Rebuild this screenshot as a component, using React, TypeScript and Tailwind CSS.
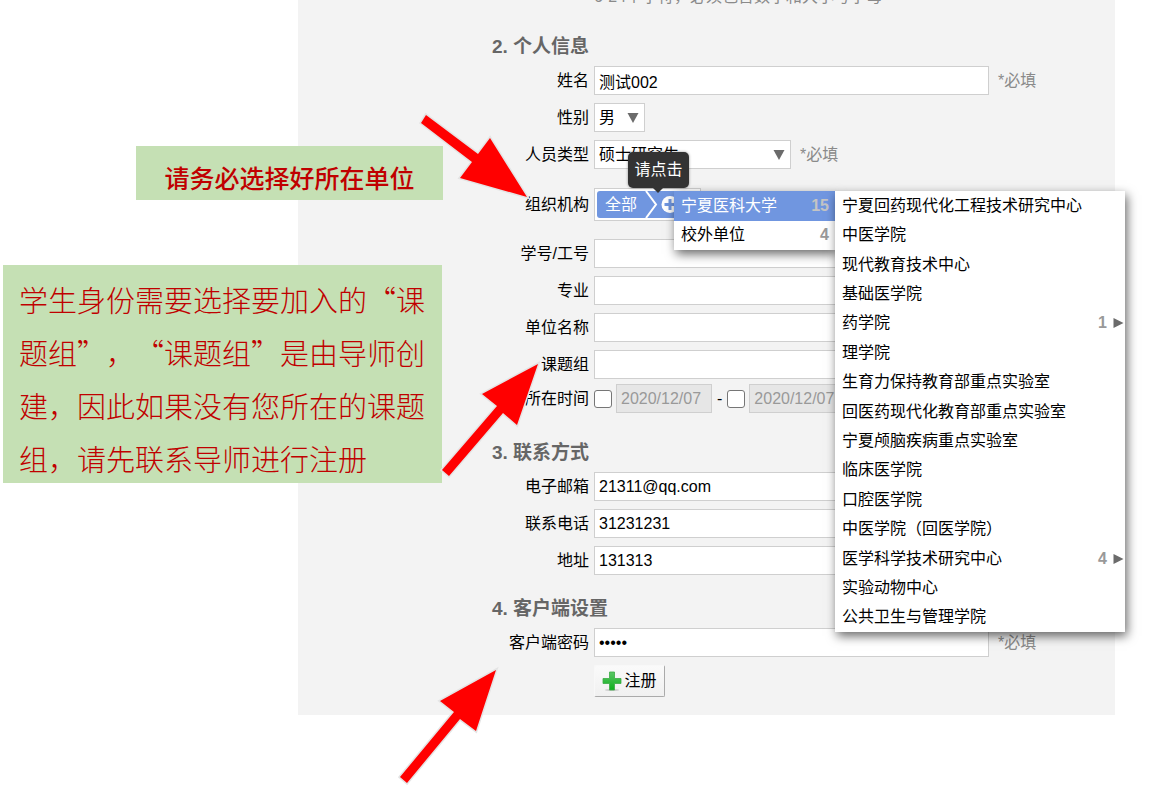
import type { ReactNode } from 'react'

type MenuEntry = { name: string; count?: number; active?: boolean }

const rootUnits: MenuEntry[] = [
  { name: '宁夏医科大学', count: 15, active: true },
  { name: '校外单位', count: 4 },
]

const subUnits: MenuEntry[] = [
  { name: '宁夏回药现代化工程技术研究中心' },
  { name: '中医学院' },
  { name: '现代教育技术中心' },
  { name: '基础医学院' },
  { name: '药学院', count: 1 },
  { name: '理学院' },
  { name: '生育力保持教育部重点实验室' },
  { name: '回医药现代化教育部重点实验室' },
  { name: '宁夏颅脑疾病重点实验室' },
  { name: '临床医学院' },
  { name: '口腔医学院' },
  { name: '中医学院（回医学院）' },
  { name: '医学科学技术研究中心', count: 4 },
  { name: '实验动物中心' },
  { name: '公共卫生与管理学院' },
]

const noteLines = [
  '学生身份需要选择要加入的“课',
  '题组”，“课题组”是由导师创',
  '建，因此如果没有您所在的课题',
  '组，请先联系导师进行注册',
]

const arrows = [
  '426,115 478,154 490,138 527,197 460,178 472,162 421,123',
  '442,470 497,406 482,394 538,364 517,425 503,413 449,476',
  '400,777 454,712 440,701 496,670 476,731 460,719 407,783',
]

const box = 'h-[29px] border border-[#cfcfcf] bg-white px-1 text-base text-black outline-none'

function Row({ label, htmlFor, children }: { label: string; htmlFor?: string; children: ReactNode }) {
  return (
    <div className="flex items-center gap-[5px]">
      <label htmlFor={htmlFor} className="w-[291px] shrink-0 text-right">
        {label}
      </label>
      {children}
    </div>
  )
}

function Required() {
  return <span className="ml-1 text-[#8a8a8a]">*必填</span>
}

function TextRow({ label, id, value = '', type = 'text', required }: { label: string; id: string; value?: string; type?: string; required?: boolean }) {
  return (
    <Row label={label} htmlFor={id}>
      <input id={id} type={type} defaultValue={value} className={`w-[395px] ${box}`} />
      {required && <Required />}
    </Row>
  )
}

function Select({ id, value, className }: { id: string; value: string; className: string }) {
  return (
    <span className={`relative ${className}`}>
      <select id={id} className={`block w-full appearance-none ${box}`}>
        <option>{value}</option>
      </select>
      <svg viewBox="0 0 12 10" className="pointer-events-none absolute top-[10px] right-[6px] h-[10px] w-3" fill="#6b6b6b">
        <path d="M0.500 0h11L6 10z" />
      </svg>
    </span>
  )
}

function DateBox({ label }: { label: string }) {
  return (
    <span className="flex items-center gap-1">
      <input type="checkbox" aria-label={label} className="h-[18px] w-[18px] appearance-none rounded-[3px] border border-[#767676] bg-white" />
      <input type="text" aria-label={label} defaultValue="2020/12/07" disabled className="h-[29px] w-24 border border-[#cfcfcf] bg-[#e6e6e6] px-1 text-base text-[#999]" />
    </span>
  )
}

function Heading({ children }: { children: ReactNode }) {
  return <h2 className="ml-[194px] h-6 text-[19px] leading-6 font-bold text-[#666]">{children}</h2>
}

function MenuItem({ item, arrow }: { item: MenuEntry; arrow?: boolean }) {
  return (
    <li className={`flex flex-1 items-center justify-between pl-[7px] ${item.active ? 'bg-[#7096e0] text-white' : 'text-black'}`}>
      <span>{item.name}</span>
      {item.count && (
        <span className="flex items-center">
          <b className={`mr-[6px] ${item.active ? 'text-[#c4c4c4]' : 'text-[#999]'}`}>{item.count}</b>
          {arrow && (
            <svg viewBox="0 0 11 12" className="mr-px h-3 w-[11px]" fill="#6b6b6b">
              <path d="M0.500 1v10l10-5z" />
            </svg>
          )}
        </span>
      )}
    </li>
  )
}

function OrgPicker() {
  return (
    <div className="relative h-[33px] w-[107px] border border-[#cfcfcf] bg-white p-[2px]">
      <div className="flex h-[27px] items-center rounded-l-[3px] bg-[#7096e0] pl-2 text-white">
        <span>全部</span>
        <svg viewBox="0 0 40 27" className="ml-2 h-[27px] w-10 shrink-0" fill="none">
          <path d="M1 0l10 13.5L1 27" stroke="#fff" strokeWidth="2" />
          <circle cx="25" cy="13.5" r="8.5" fill="#fff" />
          <path d="M25 8v11M19.500 13.500h11" stroke="#7096e0" strokeWidth="3" />
        </svg>
      </div>

      <ul className="absolute top-[2px] left-[79px] z-10 flex h-[59px] w-[161px] flex-col bg-white shadow-[2px_4px_10px_rgba(0,0,0,0.6)]">
        {rootUnits.map((item) => (
          <MenuItem key={item.name} item={item} />
        ))}
      </ul>
      <ul className="absolute top-[2px] left-60 z-20 flex h-[441px] w-[290px] flex-col bg-white shadow-[2px_4px_10px_rgba(0,0,0,0.6)]">
        {subUnits.map((item) => (
          <MenuItem key={item.name} item={item} arrow />
        ))}
      </ul>

      <div role="tooltip" className="absolute -top-[37px] left-[33px] z-30 flex h-9 w-[61px] items-center justify-center rounded-[5px] bg-[#333] whitespace-nowrap text-white shadow-[0_0_3px_rgba(0,0,0,0.4)]">
        请点击
        <svg viewBox="0 0 10 5" className="absolute top-full left-[25px] h-[5px] w-[10px]" fill="#333">
          <path d="M0 0h10L5 5z" />
        </svg>
      </div>
    </div>
  )
}

export default function App() {
  return (
    <div className="relative min-h-screen overflow-hidden bg-white pr-[49px] pl-[298px] font-['Liberation_Sans','Noto_Sans_CJK_SC',sans-serif] text-base leading-6 text-black">
      <form className="flow-root bg-[#f3f3f3] pb-[18px]">
        <p className="-mt-[13px] ml-[296px] h-5 leading-5 text-[#8a8a8a]">6-24个字符，必须包含数字和大小写字母</p>

        <div className="mt-7">
          <Heading>2. 个人信息</Heading>
        </div>
        <div className="mt-[7px] flex flex-col gap-2">
          <TextRow label="姓名" id="name" value="测试002" required />
          <Row label="性别" htmlFor="gender">
            <Select id="gender" value="男" className="w-[51px]" />
          </Row>
          <Row label="人员类型" htmlFor="type">
            <Select id="type" value="硕士研究生" className="w-[197px]" />
            <Required />
          </Row>
        </div>

        <div className="mt-[19px] mb-[18px]">
          <Row label="组织机构">
            <OrgPicker />
          </Row>
        </div>

        <div className="flex flex-col gap-2">
          <TextRow label="学号/工号" id="number" />
          <TextRow label="专业" id="major" />
          <TextRow label="单位名称" id="unit" />
          <TextRow label="课题组" id="group" />
        </div>
        <div className="mt-[5px]">
          <Row label="所在时间">
            <DateBox label="开始时间" />
            <span>-</span>
            <DateBox label="结束时间" />
          </Row>
        </div>

        <div className="mt-7">
          <Heading>3. 联系方式</Heading>
        </div>
        <div className="mt-[7px] flex flex-col gap-2">
          <TextRow label="电子邮箱" id="email" value="21311@qq.com" />
          <TextRow label="联系电话" id="phone" value="31231231" />
          <TextRow label="地址" id="address" value="131313" />
        </div>

        <div className="mt-[22px]">
          <Heading>4. 客户端设置</Heading>
        </div>
        <div className="mt-[7px] flex flex-col gap-2">
          <TextRow label="客户端密码" id="password" type="password" value="12345" required />
          <button type="button" className="ml-[296px] flex h-8 w-[71px] items-center justify-center gap-[2px] rounded-[2px] border border-t-[#f8f8f8] border-r-[#aaa] border-b-[#aaa] border-l-[#f8f8f8] bg-gradient-to-b from-[#fafafa] to-[#f0f0f0]">
            <svg viewBox="0 0 20 20" className="h-5 w-5 shrink-0">
              <defs>
                <linearGradient id="plus" x1="0" y1="0" x2="0" y2="1">
                  <stop offset="0" stopColor="#5cc667" />
                  <stop offset="1" stopColor="#0eb01c" />
                </linearGradient>
              </defs>
              <ellipse cx="10" cy="19" rx="7" ry="1" fill="#ccc" />
              <path d="M7.500 1h5v6.500H19v5h-6.500V19h-5v-6.500H1v-5h6.500z" fill="url(#plus)" stroke="#3bab45" strokeWidth="0.8" strokeLinejoin="round" />
            </svg>
            注册
          </button>
        </div>
      </form>

      <p className="absolute top-[146px] left-[136px] flex h-[54px] w-[307px] items-center justify-center bg-[#c5e0b4] pt-3 text-[25px] font-medium text-[#c00000]">
        请务必选择好所在单位
      </p>
      <p className="absolute top-[265px] left-[3px] h-[218px] w-[439px] bg-[#c5e0b4] px-4 pt-2 font-['Noto_Sans_CJK_SC',sans-serif] text-[29px] leading-[53px] font-light whitespace-nowrap text-[#c00000] [text-spacing-trim:space-all]">
        {noteLines.map((line) => (
          <span key={line} className="block">
            {line}
          </span>
        ))}
      </p>

      <svg viewBox="0 0 1164 785" className="pointer-events-none absolute top-0 left-0 z-40 h-[785px] w-[1164px]">
        {arrows.map((points) => (
          <polygon key={points} points={points} fill="#f00" stroke="#e4e4e4" strokeWidth="3" paintOrder="stroke" />
        ))}
      </svg>
    </div>
  )
}
